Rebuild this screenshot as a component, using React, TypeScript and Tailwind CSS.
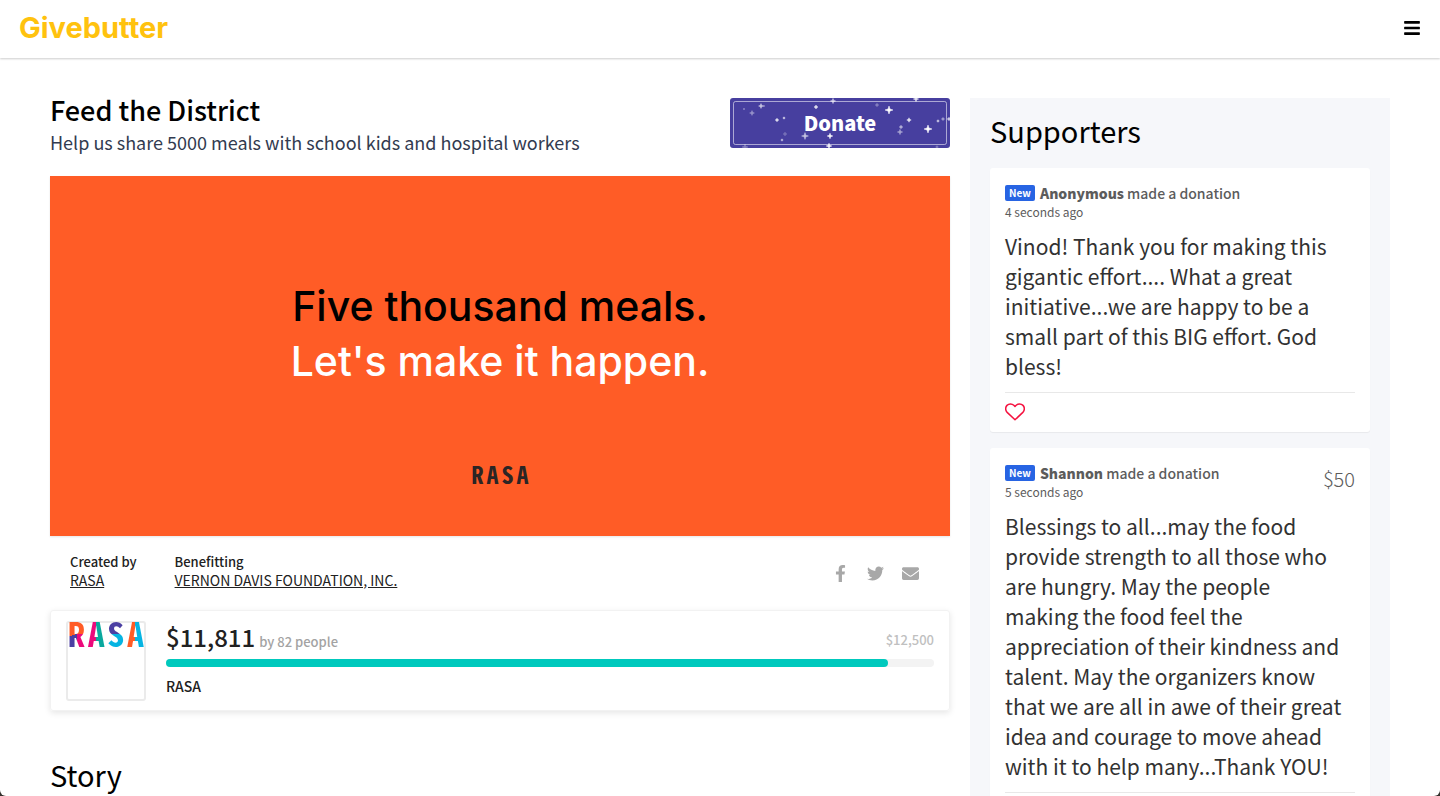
import { FaBars, FaEnvelope, FaFacebookF, FaTwitter } from "react-icons/fa";

type Star = { x: number; y: number; r: number; o: number };

const stars: Star[] = [
  { x: 14, y: 11, r: 1, o: 0.4 },
  { x: 31, y: 8, r: 2.4, o: 0.8 },
  { x: 34, y: 8, r: 1, o: 0.4 },
  { x: 22, y: 15, r: 2.4, o: 0.5 },
  { x: 47, y: 22, r: 1.8, o: 1 },
  { x: 54, y: 20, r: 1.2, o: 0.9 },
  { x: 55, y: 36, r: 2, o: 0.3 },
  { x: 52, y: 42, r: 1.2, o: 0.8 },
  { x: 15, y: 49, r: 3, o: 0.35 },
  { x: 75, y: 38, r: 3.4, o: 0.7 },
  { x: 86, y: 9, r: 2, o: 1 },
  { x: 103, y: 3, r: 2.6, o: 0.8 },
  { x: 100, y: 38, r: 2.8, o: 1 },
  { x: 99, y: 48, r: 2.8, o: 1 },
  { x: 147, y: 7, r: 1.8, o: 0.4 },
  { x: 159, y: 12, r: 4, o: 1 },
  { x: 186, y: 1, r: 2.6, o: 1 },
  { x: 179, y: 22, r: 2.2, o: 1 },
  { x: 171, y: 29, r: 1.8, o: 0.7 },
  { x: 170, y: 34, r: 2.6, o: 0.6 },
  { x: 198, y: 31, r: 4, o: 1 },
  { x: 208, y: 23, r: 1.3, o: 0.9 },
  { x: 213, y: 21, r: 1.6, o: 0.6 },
  { x: 219, y: 21, r: 1.8, o: 0.9 },
  { x: 207, y: 49, r: 1.4, o: 0.4 },
];

function starPath({ x, y, r }: Star) {
  const k = r * 0.24;
  return `M${x} ${y - r}L${x + k} ${y - k}L${x + r} ${y}L${x + k} ${y + k}L${x} ${y + r}L${x - k} ${y + k}L${x - r} ${y}L${x - k} ${y - k}Z`;
}

function DonateButton() {
  return (
    <button
      type="button"
      className="relative h-[50px] w-[220px] shrink-0 overflow-hidden rounded-[3px] bg-[#473f9f] text-[20px] leading-[50px] font-black text-white"
    >
      <svg className="absolute inset-0" width="220" height="50" viewBox="0 0 220 50" aria-hidden="true">
        <rect x="3.5" y="3.5" width="213" height="43" rx="2" fill="none" stroke="#fff" strokeOpacity="0.55" />
        {stars.map((s) => (
          <path key={`${s.x}-${s.y}`} d={starPath(s)} fill="#fff" stroke="#fff" strokeWidth="0.5" opacity={s.o} />
        ))}
      </svg>
      <span className="relative">Donate</span>
    </button>
  );
}

type SupporterProps = { name: string; time: string; message: string; amount?: string };

function Supporter({ name, time, message, amount }: SupporterProps) {
  return (
    <article className="rounded-[3px] bg-white px-[15px] pt-[15px] shadow-[0_1px_1px_rgba(0,0,0,0.06)]">
      <header className="flex items-start justify-between text-[#5c5c5c]">
        <div>
          <p className="flex items-center gap-[5px] text-[14px] leading-[20px] font-medium">
            <span className="rounded-[2px] bg-[#2764e3] px-1 text-[10px] leading-[16px] font-bold text-white">New</span>
            <span>
              <strong className="font-black">{name}</strong> made a donation
            </span>
          </p>
          <p className="text-[12px] leading-[18px]">{time}</p>
        </div>
        {amount && <p className="text-[20px] leading-[32px] font-light">{amount}</p>}
      </header>
      <p className="mt-[10px] pr-[10px] text-[21px] leading-[30px] text-[#323232]">{message}</p>
      <footer className="mt-[11px] flex h-[40px] items-center border-t border-[#e8e8e8] pb-[2px]">
        <button type="button" aria-label="Like" className="text-[#f5113f]">
          <svg width="20" height="18" viewBox="0 0 20 18" fill="none" stroke="currentColor" strokeWidth="1.5" strokeLinejoin="round" aria-hidden="true">
            <path d="M10 16.8 1.9 9.1C.2 7.2.3 4.1 2 2.4 3.9.5 7 .5 8.8 2.3L10 3.5l1.2-1.2C13 .5 16.1.5 18 2.4c1.7 1.7 1.8 4.8.1 6.7Z" />
          </svg>
        </button>
      </footer>
    </article>
  );
}

function RasaMark() {
  return (
    <span className="flex justify-between font-['Noto_Sans_Mono_CJK_SC','Noto_Sans_CJK_SC',sans-serif] text-[34px] leading-[22px] font-bold text-transparent">
      <span className="-mt-[2px] bg-[conic-gradient(#ff5c26_0_25%,#ec0a7c_25%_50%,#4b3fa2_50%_70%,#ff5c26_70%)] bg-clip-text pt-[1px] pb-[3px]">R</span>
      <span className="-mt-[2px] bg-[linear-gradient(90deg,#ec0a7c_50%,#0aa89e_50%)] bg-clip-text pt-[1px] pb-[3px]">A</span>
      <span className="-mt-[2px] bg-[linear-gradient(180deg,#4b3fa2_50%,#06b4e2_50%)] bg-clip-text pt-[1px] pb-[3px]">S</span>
      <span className="-mt-[2px] bg-[linear-gradient(90deg,#ff5c26_50%,#06b4e2_50%)] bg-clip-text pt-[1px] pb-[3px]">A</span>
    </span>
  );
}

export default function App() {
  return (
    <div className="h-screen bg-[#33302c] font-['Noto_Sans_CJK_SC',sans-serif]">
      <div className="h-full overflow-y-auto rounded-b-[6px] bg-white [scrollbar-width:none]">
        <header className="flex h-[58px] items-center justify-between px-[19px] pb-[2px] shadow-[0_1px_2px_rgba(0,0,0,0.2)]">
          <a href="#" className="font-['Inter',sans-serif] text-[29px] leading-[32px] font-bold text-[#ffc20e]">
            Givebutter
          </a>
          <button type="button" aria-label="Menu" className="text-black">
            <FaBars size={18} />
          </button>
        </header>

        <div className="flex items-start gap-5 px-[50px] pt-10">
          <main className="min-w-0 flex-1">
            <div className="flex items-start justify-between">
              <div>
                <h1 className="text-[27px] leading-[24px] font-medium text-black">Feed the District</h1>
                <p className="mt-[6px] text-[18px] leading-[28px] text-[#323b50]">
                  Help us share 5000 meals with school kids and hospital workers
                </p>
              </div>
              <DonateButton />
            </div>

            <section className="mt-5 flex h-[360px] flex-col items-center bg-[#ff5c26] pt-[103px] font-['Inter',sans-serif] text-[41px] leading-[55px] font-medium shadow-[0_1px_2px_rgba(0,0,0,0.1)]">
              <p className="text-black">Five thousand meals.</p>
              <p className="text-white">Let's make it happen.</p>
              <p className="mt-[70px] flex gap-[3px] font-['Noto_Sans_Mono_CJK_SC','Noto_Sans_CJK_SC',sans-serif] text-[24px] leading-[30px] font-bold text-[#2b2525]">
                <span>R</span>
                <span>A</span>
                <span>S</span>
                <span>A</span>
              </p>
            </section>

            <section className="flex h-[74px] items-center justify-between pr-[31px] pl-5 text-[#212121]">
              <dl className="flex gap-[38px] pb-[5px] leading-[19px]">
                <div>
                  <dt className="text-[13px] font-medium">Created by</dt>
                  <dd className="text-[14px]">
                    <a href="#" className="underline">RASA</a>
                  </dd>
                </div>
                <div>
                  <dt className="text-[13px] font-medium">Benefitting</dt>
                  <dd className="text-[14px]">
                    <a href="#" className="underline">VERNON DAVIS FOUNDATION, INC.</a>
                  </dd>
                </div>
              </dl>
              <nav className="flex items-center gap-[18px] text-[#a8a8a8]">
                <a href="#" aria-label="Share on Facebook"><FaFacebookF size={17} /></a>
                <a href="#" aria-label="Share on Twitter"><FaTwitter size={17} /></a>
                <a href="#" aria-label="Share by email"><FaEnvelope size={17} /></a>
              </nav>
            </section>

            <section className="flex gap-5 rounded-[3px] border border-[#f2f2f2] px-[15px] pt-[10px] pb-[9px] shadow-[0_2px_6px_rgba(0,0,0,0.1)]">
              <div className="h-[80px] w-[80px] shrink-0 rounded-[3px] border-2 border-[#ebebeb]">
                <RasaMark />
              </div>
              <div className="min-w-0 flex-1 text-[#212121]">
                <div className="flex h-9 items-center justify-between text-[13px] leading-[31px] font-medium">
                  <p className="text-[#a3a3a3]">
                    <strong className="mr-1 text-[24px] font-medium text-[#212121]">$11,811</strong>
                    by 82 people
                  </p>
                  <p className="text-[#c0c0c0]">$12,500</p>
                </div>
                <div className="mt-[2px] h-2 rounded-full bg-[#f3f3f3]">
                  <div className="h-2 w-[94%] rounded-full bg-[#00c9bd]" />
                </div>
                <p className="mt-2 text-[14px] leading-[22px] font-medium">RASA</p>
              </div>
            </section>

            <h2 className="mt-[43px] text-[29px] leading-[40px] text-black">Story</h2>
          </main>

          <aside className="w-[420px] shrink-0 bg-[#f6f7fa] px-5 pt-[15px] pb-5">
            <h2 className="mb-5 text-[29px] leading-[35px] text-black">Supporters</h2>
            <div className="flex flex-col gap-4">
              <Supporter
                name="Anonymous"
                time="4 seconds ago"
                message="Vinod! Thank you for making this gigantic effort.... What a great initiative...we are happy to be a small part of this BIG effort. God bless!"
              />
              <Supporter
                name="Shannon"
                time="5 seconds ago"
                amount="$50"
                message="Blessings to all...may the food provide strength to all those who are hungry. May the people making the food feel the appreciation of their kindness and talent. May the organizers know that we are all in awe of their great idea and courage to move ahead with it to help many...Thank YOU!"
              />
            </div>
          </aside>
        </div>
      </div>
    </div>
  );
}
